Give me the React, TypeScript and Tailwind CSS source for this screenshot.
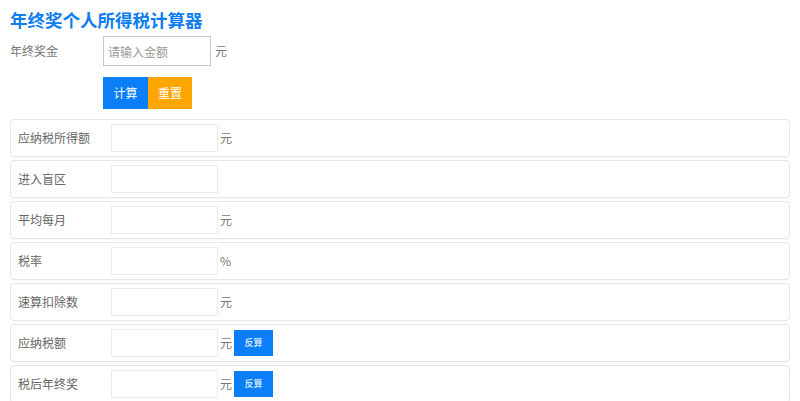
import React from "react";

const rows: { label: string; unit?: string; btn?: boolean }[] = [
  { label: "应纳税所得额", unit: "元" },
  { label: "进入盲区" },
  { label: "平均每月", unit: "元" },
  { label: "税率", unit: "%" },
  { label: "速算扣除数", unit: "元" },
  { label: "应纳税额", unit: "元", btn: true },
  { label: "税后年终奖", unit: "元", btn: true },
];

export default function App() {
  return (
    <div
      className="w-[800px] h-[401px] overflow-hidden bg-white px-[10px] pt-[7px]"
      style={{ fontFamily: '"Noto Sans CJK SC", "Noto Sans", sans-serif' }}
    >
      <div className="h-[26px] leading-[26px] text-[17.5px] font-bold text-[#0d7df2]">
        年终奖个人所得税计算器
      </div>
      <div className="mt-[3px] flex items-center h-[30px]">
        <div className="w-[93px] text-[12px] text-[#777]">年终奖金</div>
        <input
          className="w-[108px] h-[30px] border border-[#c8c8c8] px-[4px] text-[12px] text-[#333] placeholder:text-[#999] outline-none"
          placeholder="请输入金额"
        />
        <span className="ml-[4px] text-[12px] text-[#777]">元</span>
      </div>
      <div className="mt-[11px] flex pl-[93px]">
        <button className="w-[45px] h-[32px] bg-[#0a7ff9] text-white text-[12px]">计算</button>
        <button className="w-[44px] h-[32px] bg-[#ffa600] text-white text-[12px]">重置</button>
      </div>
      <div className="mt-[10px] flex flex-col gap-[3px]">
        {rows.map((r) => (
          <div
            key={r.label}
            className="h-[38px] border border-[#e6e6e6] rounded-[4px] flex items-center pl-[7px] shadow-[0_1px_1px_rgba(0,0,0,0.03)]"
          >
            <div className="w-[93px] text-[12px] text-[#666]">{r.label}</div>
            <input className="w-[107px] h-[28px] border border-[#ececec] outline-none text-[12px] px-[4px]" />
            {r.unit && <span className="ml-[2px] text-[12px] text-[#777]">{r.unit}</span>}
            {r.btn && (
              <button className="ml-[2px] w-[39px] h-[26px] bg-[#0a7ff9] text-white text-[9px]">反算</button>
            )}
          </div>
        ))}
      </div>
    </div>
  );
}
